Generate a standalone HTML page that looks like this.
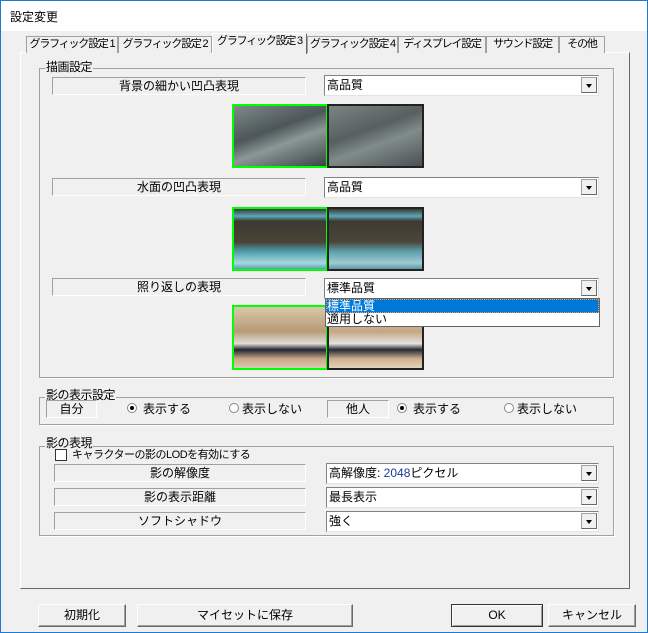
<!DOCTYPE html>
<html><head><meta charset="utf-8"><style>
*{box-sizing:border-box;margin:0;padding:0}
body{width:648px;height:633px;background:#f0f0f0;font-family:"Liberation Sans","Noto Sans CJK JP",sans-serif;font-size:12px;color:#000;position:relative;overflow:hidden}
.a{position:absolute;line-height:14px}
.win{left:0;top:0;width:648px;height:633px;border:1px solid #1a7ad4}
.title{left:1px;top:1px;width:646px;height:30px;background:#fff}
.tab{position:absolute;top:36px;height:17px;border:1px solid #a0a0a0;border-bottom:none;background:#f0f0f0;font-size:11px;line-height:15px;text-align:center;white-space:nowrap;letter-spacing:-1.2px;overflow:hidden}
.panel{left:20px;top:52px;width:610px;height:537px;border:1px solid #fff;border-right:1px solid #696969;border-bottom:1px solid #696969}
.grp{position:absolute;border:1px solid #a0a0a0;box-shadow:1px 1px 0 #fff}
.gl{position:absolute;background:#f0f0f0;padding:0 1px;line-height:13px;letter-spacing:-0.5px}
.lb{position:absolute;border:1px solid #a0a0a0;border-right-color:#fff;border-bottom-color:#fff;text-align:center;line-height:17px}
.cb{position:absolute;background:#fff;border:1px solid #828282;border-right-color:#e3e3e3;border-bottom-color:#e3e3e3;line-height:19px;padding-left:2px}
.cb i{position:absolute;right:1px;top:1px;width:16px;height:16px;background:#f0f0f0;border:1px solid #a0a0a0;border-right-color:#696969;border-bottom-color:#696969}
.cb i:after{content:"";position:absolute;left:4px;top:6px;border-left:3.5px solid transparent;border-right:3.5px solid transparent;border-top:4px solid #000}
.img{position:absolute;width:96px;height:64px;border:2px solid #222}
.g{border-color:#00ff00}
.btn{position:absolute;height:23px;border:1px solid #fff;border-right-color:#696969;border-bottom-color:#696969;box-shadow:inset -1px -1px 0 #a0a0a0;background:#f0f0f0;text-align:center;line-height:21px}
.rad{position:absolute;width:10px;height:10px;border-radius:50%;background:#fff;border:1px solid #888}
.rad.on:after{content:"";position:absolute;left:2px;top:2px;width:4px;height:4px;border-radius:50%;background:#000}
</style></head><body>
<div class="a win"></div>
<div class="a title"></div>
<div class="a" style="left:10px;top:10px;font-size:12px">設定変更</div>

<div class="a panel"></div>
<div class="tab" style="left:26px;width:92px">グラフィック設定 1</div>
<div class="tab" style="left:118px;width:94px">グラフィック設定 2</div>
<div class="tab" style="left:307px;width:91px">グラフィック設定 4</div>
<div class="tab" style="left:398px;width:88px">ディスプレイ設定</div>
<div class="tab" style="left:486px;width:73px">サウンド設定</div>
<div class="tab" style="left:559px;width:46px">その他</div>
<div class="tab" style="left:212px;top:33px;width:95px;height:21px;border-color:#fff #696969 transparent #fff;z-index:2">グラフィック設定 3</div>

<div class="grp" style="left:39px;top:68px;width:575px;height:310px"></div>
<div class="gl" style="left:45px;top:61px">描画設定</div>

<div class="lb" style="left:52px;top:77px;width:254px;height:18px">背景の細かい凹凸表現</div>
<div class="cb" style="left:324px;top:75px;width:275px;height:21px">高品質<i></i></div>
<div class="img g" style="left:232px;top:104px;background:linear-gradient(160deg,#7d8a88,#4d5659 40%,#8a9896 60%,#3b4346)"></div>
<div class="img" style="left:327px;top:104px;width:97px;background:linear-gradient(160deg,#7a8684,#56605f 40%,#808c8a 60%,#4a5254)"></div>

<div class="lb" style="left:52px;top:178px;width:254px;height:18px">水面の凹凸表現</div>
<div class="cb" style="left:324px;top:177px;width:275px;height:21px">高品質<i></i></div>
<div class="img g" style="left:232px;top:207px;background:linear-gradient(180deg,#3c3a34 0,#5ba8b8 12%,#3d3a33 20%,#4a4235 55%,#4c9aa8 70%,#a8d8e0 90%,#5aa0b0)"></div>
<div class="img" style="left:327px;top:207px;width:97px;background:linear-gradient(180deg,#3c3a34 0,#5ba8b8 12%,#3d3a33 20%,#4c4639 55%,#5b9ca8 70%,#9fcbd2 90%,#5a98a8)"></div>

<div class="lb" style="left:52px;top:278px;width:254px;height:18px">照り返しの表現</div>
<div class="cb" style="left:324px;top:278px;width:275px;height:21px">標準品質<i></i></div>
<div class="img g" style="left:232px;top:305px;height:65px;background:linear-gradient(180deg,#d8c8a8,#b89a78 40%,#e0dcd8 60%,#222630 70%,#c8a888 85%,#dccbb0)"></div>
<div class="img" style="left:327px;top:305px;width:97px;height:65px;background:linear-gradient(180deg,#e0d2b4,#c4a684 40%,#e6e2de 60%,#262a34 70%,#cfb090 85%,#e2d2b8)"></div>
<div class="a" style="left:325px;top:298px;width:275px;height:29px;background:#fff;border:1px solid #646464;z-index:3">
 <div style="height:14px;background:#0078d7;color:#fff;line-height:14px;padding-left:1px;outline:1px dotted #f0a050;outline-offset:-1px">標準品質</div>
 <div style="height:13px;line-height:13px;padding-left:1px">適用しない</div>
</div>

<div class="grp" style="left:39px;top:397px;width:575px;height:28px"></div>
<div class="gl" style="left:45px;top:389px">影の表示設定</div>
<div class="lb" style="left:46px;top:400px;width:51px;height:18px">自分</div>
<div class="rad on" style="left:127px;top:403px"></div><div class="a" style="left:143px;top:402px">表示する</div>
<div class="rad" style="left:229px;top:403px"></div><div class="a" style="left:242px;top:402px">表示しない</div>
<div class="lb" style="left:327px;top:400px;width:62px;height:18px">他人</div>
<div class="rad on" style="left:397px;top:403px"></div><div class="a" style="left:413px;top:402px">表示する</div>
<div class="rad" style="left:504px;top:403px"></div><div class="a" style="left:517px;top:402px">表示しない</div>

<div class="grp" style="left:39px;top:446px;width:575px;height:90px"></div>
<div class="gl" style="left:45px;top:437px">影の表現</div>
<div class="a" style="left:55px;top:449px;width:12px;height:12px;background:#fff;border:1px solid #333"></div>
<div class="a" style="left:72px;top:448px;font-size:11px;letter-spacing:-0.5px">キャラクターの影のLODを有効にする</div>
<div class="lb" style="left:54px;top:464px;width:252px;height:18px">影の解像度</div>
<div class="cb" style="left:326px;top:463px;width:273px;height:21px">高解像度: <span style="color:#1a3a9a">2048</span>ピクセル<i></i></div>
<div class="lb" style="left:54px;top:488px;width:252px;height:18px">影の表示距離</div>
<div class="cb" style="left:326px;top:487px;width:273px;height:21px">最長表示<i></i></div>
<div class="lb" style="left:54px;top:512px;width:252px;height:18px">ソフトシャドウ</div>
<div class="cb" style="left:326px;top:511px;width:273px;height:21px">強く<i></i></div>

<div class="btn" style="left:38px;top:604px;width:88px">初期化</div>
<div class="btn" style="left:137px;top:604px;width:216px">マイセットに保存</div>
<div class="btn" style="left:451px;top:604px;width:92px;border:1px solid #333;box-shadow:inset 1px 1px 0 #fff,inset -1px -1px 0 #a0a0a0">OK</div>
<div class="btn" style="left:548px;top:604px;width:88px">キャンセル</div>
</body></html>
